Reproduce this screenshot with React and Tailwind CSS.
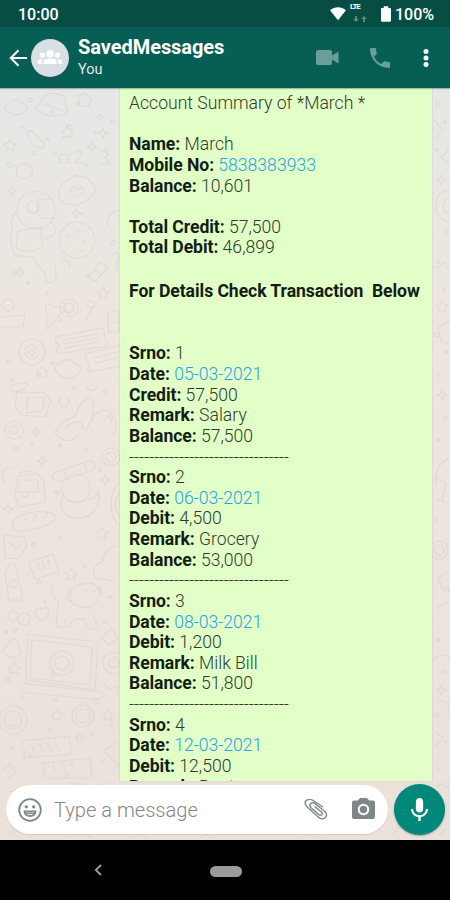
const summary = [
  { label: "Name", value: "March" },
  { label: "Mobile No", value: "5838383933", link: true },
  { label: "Balance", value: "10,601" },
];

const totals = [
  { label: "Total Credit", value: "57,500" },
  { label: "Total Debit", value: "46,899" },
];

const transactions = [
  { srno: "1", date: "05-03-2021", type: "Credit", amount: "57,500", remark: "Salary", balance: "57,500" },
  { srno: "2", date: "06-03-2021", type: "Debit", amount: "4,500", remark: "Grocery", balance: "53,000" },
  { srno: "3", date: "08-03-2021", type: "Debit", amount: "1,200", remark: "Milk Bill", balance: "51,800" },
  { srno: "4", date: "12-03-2021", type: "Debit", amount: "12,500", remark: "Rent" },
];

const dots = [
  [30, 100], [52, 112], [78, 104], [100, 117], [22, 127], [48, 139], [70, 127], [95, 133],
  [112, 121], [34, 153], [86, 165], [106, 150], [9, 165], [55, 153], [82, 214], [113, 243],
  [28, 283], [47, 293], [14, 274], [88, 276], [60, 320], [9, 362], [53, 363], [39, 374],
  [106, 392], [74, 388], [12, 380], [16, 449], [32, 445], [60, 445], [85, 450], [56, 492],
  [100, 470], [34, 545], [60, 537], [85, 567], [39, 582], [45, 602], [110, 597], [15, 630],
  [6, 632], [105, 622], [8, 680], [22, 697], [56, 700], [97, 701], [112, 725], [50, 730],
  [79, 738], [92, 734], [12, 748], [66, 776], [30, 755], [103, 762],
  [438, 104], [445, 122], [437, 150], [446, 232], [438, 262], [444, 290], [437, 335],
  [446, 352], [439, 375], [445, 418], [438, 440], [437, 520], [447, 590], [438, 640],
  [445, 672], [437, 715], [446, 742], [439, 770],
];

const sparks = [
  [103, 133], [92, 147], [12, 191], [76, 213], [42, 461], [8, 509], [105, 480], [20, 272],
  [36, 432], [441, 180], [442, 395], [441, 690],
];

const stars = [
  [10, 145], [67, 132], [103, 293], [102, 533], [71, 574], [57, 715], [14, 668], [108, 715], [442, 306],
];

const Doodles = () => (
  <svg
    className="absolute inset-0 h-full w-full"
    viewBox="0 88 450 752"
    preserveAspectRatio="none"
    fill="none"
    stroke="#d9d4cc"
    strokeOpacity="0.62"
    strokeWidth="1.2"
    strokeLinejoin="round"
    strokeLinecap="round"
  >
    {dots.map(([x, y], i) => (
      <circle key={i} cx={x} cy={y} r={i % 3 === 0 ? 2.2 : 1.4} />
    ))}
    {sparks.map(([x, y], i) => (
      <path
        key={i}
        transform={`translate(${x} ${y})`}
        d="M0-5 1.4-1.4 5 0 1.4 1.4 0 5-1.4 1.4-5 0-1.4-1.4z"
      />
    ))}
    {stars.map(([x, y], i) => (
      <path
        key={i}
        transform={`translate(${x} ${y})`}
        d="M0-6 2-2 6-1 3 2 4 6 0 4-4 6-3 2-6-1-2-2z"
      />
    ))}
    {/* clouds and hat */}
    <path d="M8 112c-5-3-2-8 2-8 1-5 9-6 11-1 5 0 8 5 4 9-5 4-12 3-17 0z" />
    <path d="M35 108c5-3 7-10 12-14 6-1 12 0 17 2l4 17c-10 5-25 4-33-5zM45 104l18 7" />
    <path d="M78 96l8-3 5 6-3 8-8-1z" />
    <path d="M27 133c1-3 6-3 8 1l9 10c1 5-4 5-7 3-5-3-9-9-10-14z" />
    <path d="M17 174c-2-5 0-10 6-10 6-1 11 4 9 9-2 6-12 8-15 1z" />
    <path d="M59 156l4-2 5 1v8h-8zM74 153c4-5 9-1 7 3l-6 7h9" />
    <path d="M100 150l9 4-4 4 5 5-10 2" />
    {/* badge with a heart */}
    <path d="M61 187c4-9 10-7 14-12 6 4 11-2 15 7 7 4 7 10 1 14-5 8-10 6-16 10-5-4-14 0-15-8-3-4-2-7 1-11z" />
    <path d="M77 197c-9-4-7-11-2-10l3 2c5-5 10 3-1 8z" />
    {/* helmet and robot */}
    <circle cx="36" cy="210" r="19" />
    <circle cx="33" cy="207" r="6" />
    <path d="M38 199h14M41 218h13M41 199c-5 4-5 14 0 19" />
    <path d="M16 212c-6 5-5 12-4 18l-2 8 4 17c8 2 13 0 20 3 4 13 12 9 12 24 11 2 11-6 9-16" />
    <path d="M18 231l22-4 3 19c-8 6-21 6-27 2zM51 222c8 6 4 15-6 17" />
    <circle cx="77" cy="240" r="18" strokeDasharray="6 2" />
    <path d="M67 236h3M77 230l3 1M84 240v3M72 248h3M80 252l2-2M86 232h2" />
    <path d="M108 226c-3-10 5-15 12-16M62 262c5-4 10 1 7 5M88 278l12-16 8 5-12 14zM95 270l7 5" />
    <path d="M112 255c4-6 9 1 5 5v10" />
    {/* flashlight */}
    <path d="M46 304l19 5-18 20zM65 309l5 7" />
    <circle cx="69" cy="308" r="9" strokeDasharray="2 1.5" />
    <circle cx="69" cy="308" r="5" />
    <path d="M86 320l6-12c-7-1-5-8 0-7 5 1 3 6-1 7" />
    <circle cx="8" cy="305" r="6" />
    <path d="M3 317l22-2-2 12H0M108 312h11v20h-11zM108 322h11" />
    <circle cx="32" cy="352" r="13" />
    <circle cx="32" cy="352" r="7" />
    <path d="M28 352l7-4-2 8z" />
    {/* tickets */}
    <path d="M55 337l48-9 4 18-49 8-1-5 2-4-3-3zM63 340l34-6M64 344l34-6M65 348l34-6" />
    <path d="M85 354l35-9M88 372l32-6M85 354l1 6 3 3-1 9M94 358l24-6M95 363l23-5" />
    <path d="M57 373c-5-6 1-11 5-10 3-6 11-4 12 1 8 0 8 9 3 11-5 5-14 5-20-2z" />
    <circle cx="42" cy="373" r="5" />
    <path d="M10 388c4-6 14-6 18-4-3 6-12 10-17 7z" />
    <path d="M17 392l28 1 6 8-6 16-24-2-6-9zM27 398l18-1-3 14-15 2z" />
    <circle cx="14" cy="430" r="9" strokeDasharray="4 2" />
    <circle cx="14" cy="430" r="4" />
    {/* mountain and bird */}
    <path d="M56 432c3-9 10-12 20-17 3-13 14-22 17-15 2 14-2 20-7 31M65 429c8-10 19-9 18 0M86 385c2 8 8 7 12 1" />
    <path d="M92 422c0-9 15-19 21-5 5 6 4 13-2 18M104 420l5-5 3 8" />
    <circle cx="64" cy="402" r="5" />
    <path d="M54 431c5 8 16 15 24 4" />
    <circle cx="111" cy="457" r="9" />
    <circle cx="111" cy="457" r="5" />
    {/* backpack */}
    <path d="M18 476l20-2 6 8 1 20-25 5-5-10zM20 480h18v12H18zM20 474c1-4 14-4 16 0" />
    <circle cx="25" cy="494" r="3" />
    <path d="M4 484c-5-14 3-20 9-15" />
    {/* snowman */}
    <path d="M54 473l34-12c6-2 9 6 4 10l-31 10c-7 2-12-5-7-8zM64 471l1 6M84 463l3 7" />
    <circle cx="76" cy="488" r="14" />
    <path d="M64 494c-7 13-1 24 14 24s24-13 19-26M66 500c8 4 19 2 30-4M60 492l-5 7M98 490l2 8" />
    <path d="M13 527c-3-8 6-12 16-14 13-3 27-1 26 4-1 8-18 11-25 13-8 2-15 2-17-3zM23 522l4-5M33 520l4-6M44 518l3-5" />
    <path d="M120 482c-12 8-12 36 0 44M120 493c-6 5-6 17 0 24" />
    <path d="M4 535l20 2 3 9-9 12-13 1zM10 543l6 5 5-5" />
    <path d="M29 562l24-8 6 18-24 7zM37 562l3 8M42 560l3 9M48 559l2 8" />
    <path d="M120 546c-12 0-17 8-18 16-7 2-10 10-7 16 6 3 13-1 18 4" />
    <path d="M5 572l4-8h6l7 30-1 7H9zM10 599h11" />
    <circle cx="13" cy="584" r="4" />
    {/* puppy */}
    <path d="M54 583c-4 6-2 14 4 18 2 8-4 14-1 26h13c1-9 7-9 14-8l4 10h11c-2-8-7-8-5-15M70 598c0-9 5-14 15-14 9-3 16 4 14 11-2 12-13 14-21 11-4-1-7-4-8-8z" />
    <path d="M70 590l-4 9 6 2M99 586l3 9M65 625v-6M86 590v2M94 590v2" />
    <path d="M42 621c-11-6-7-16 0-12 6-5 12 4 0 12z" />
    <circle cx="13" cy="616" r="5" />
    <circle cx="24" cy="619" r="6" />
    <path d="M2 650c6-2 6-11 12-11 6 1 4 9 7 14-5 6-14 6-19-3z" />
    {/* laptop */}
    <path d="M28 634l70 8-3 48-68-10c-3-12 1-30 1-46z" />
    <path d="M32 640l60 7-2 38-60-7z" />
    <path d="M21 692l68 7c14 2 19-6 11-7l-77-9" />
    <circle cx="62" cy="663" r="12" />
    <circle cx="62" cy="663" r="7" />
    <path d="M53 671l-2 6 7-3M101 637l11-9 6 11-10 6z" />
    <circle cx="114" cy="663" r="11" />
    <circle cx="114" cy="663" r="5" />
    <circle cx="13" cy="720" r="14" />
    <circle cx="13" cy="720" r="9" />
    <path d="M10 718v2M16 718v2M9 724c3 3 6 2 8 0" />
    <circle cx="83" cy="716" r="11" />
    <circle cx="83" cy="716" r="7" />
    <path d="M80 705l3-4 4 4M104 684l6 5 8-3-1 9" />
    <path d="M22 741l47-5 3 18-49 4 2-6-3-4zM31 744l4 9M39 743l4 9M47 742l4 9M55 742l4 8" />
    <path d="M43 763l47-5 2 20H44zM53 764l3 8M62 763l3 8M71 762l3 8" />
    <path d="M104 750l13-8M105 752l14 14M2 770l8-6 6 8-8 7" />
    <circle cx="80" cy="738" r="4" />
    {/* right edge */}
    <path d="M450 190c-18 0-20 30 0 32M450 198c-9 2-9 14 0 16M434 120l9 10-7 9M450 148l-9 10 9 6" />
    <path d="M436 268l8-5 6 8M450 320l-12 8 4 14 8 2M450 458c-10 3-16 14-14 28M434 478l12 5-4 18M436 500l14 3" />
    <circle cx="439" cy="550" r="9" />
    <circle cx="439" cy="550" r="5" />
    <path d="M450 570l-12 8 5 12M436 608l12-6M434 660c6-8 14-5 16-2M438 700l12 4v14M436 732l7 6-7 8M434 790l8-7 8 6" />
    {/* around the input */}
    <path d="M10 792c8-5 15-2 20 2M70 783l14 2 5 6M100 785l9-3M70 837c8-5 16-4 22 1M128 838l12-4 7 5M200 838c4-4 10-4 14 0M300 838l8-3 14 3M8 834l9-4M392 834l7-6M440 836l7-8" />
  </svg>
);

const Field = ({ label, value, link }) => (
  <p>
    <b className="font-bold tracking-[-0.07px] text-[#141d12]">{label}:</b>{" "}
    <span className={link ? "text-[#2aa3e6]" : ""}>{value}</span>
  </p>
);

const StatusBar = () => (
  <div className="flex h-[27px] shrink-0 items-center bg-[#074d44] pl-[18px] pr-4 text-white">
    <span className="mt-0.5 text-base font-medium leading-none">10:00</span>
    <div className="ml-auto flex items-center">
      <svg className="h-[15px] w-[18px]" viewBox="0 0 18 15" fill="#fff">
        <path d="M1 4.2C5.6.1 12.400.1 17 4.200L9 14.300z" />
      </svg>
      <div className="ml-[3px] flex h-[24px] w-5 flex-col">
        <span className="text-[8px] font-bold leading-[10px] tracking-[-1px]">LTE</span>
        <svg className="ml-[3px] mt-[3px] h-2 w-[14px]" viewBox="0 0 14 8" fill="#5d8983">
          <path d="M2 1h2v3h2L3 7 0 4h2zM10 7h2V4h2l-3-3-3 3h2z" />
        </svg>
      </div>
      <svg className="ml-[11px] h-4 w-[10px]" viewBox="0 0 11 17" fill="#fff">
        <path d="M3 0h5v2h2q1 0 1 1v13q0 1-1 1H1q-1 0-1-1V3q0-1 1-1h2z" />
      </svg>
      <span className="ml-1 mt-0.5 text-base font-medium leading-none">100%</span>
    </div>
  </div>
);

const Header = () => (
  <div className="relative z-10 flex h-[61px] shrink-0 items-center bg-[#075e54] pl-[9px] text-white shadow-[0_1px_1px_rgba(0,0,0,0.25)]">
    <svg className="h-[18px] w-[18px]" viewBox="0 0 18 18" fill="none" stroke="#fff" strokeWidth="2">
      <path d="M18 9H2M9.500 1.300 1.800 9l7.700 7.700" />
    </svg>
    <div className="ml-1 flex h-[38px] w-[38px] items-center justify-center rounded-full bg-[#d9dfe4]">
      <svg className="h-[17px] w-[26px]" viewBox="0 0 26 18" fill="#fff">
        <circle cx="13" cy="5" r="4" />
        <path d="M6 16v-2.500C6 11 10 10 13 10s7 1 7 3.500V16z" />
        <circle cx="5" cy="6.500" r="2.700" />
        <circle cx="21" cy="6.500" r="2.700" />
        <path d="M0 16v-2.500c0-2 3-3 5.500-3-1 1-1.300 2-1.300 3V16zM26 16v-2.500c0-2-3-3-5.500-3 1 1 1.300 2 1.300 3V16z" />
      </svg>
    </div>
    <div className="ml-[9px] flex flex-col">
      <span className="text-[20px] font-bold leading-[22px] tracking-[-0.05px]">SavedMessages</span>
      <span className="mt-[3px] text-[14.500px] leading-[18px] text-[#dfeae8]">You</span>
    </div>
    <div className="ml-auto flex items-center">
      <svg className="h-[15px] w-[23px]" viewBox="0 0 23 16" preserveAspectRatio="none" fill="#6a9e98">
        <path d="M2 0h12q2 0 2 2v3.800L22.500 1.500v13L16 10.200V14q0 2-2 2H2q-2 0-2-2V2q0-2 2-2z" />
      </svg>
      <svg className="ml-[31px] h-5 w-5" viewBox="3 3 18 18" fill="#6a9e98">
        <path d="M6.620 10.790c1.440 2.830 3.760 5.140 6.590 6.590l2.200-2.200c.27-.27.67-.36 1.020-.24 1.120.37 2.330.57 3.570.57.55 0 1 .45 1 1V20c0 .55-.45 1-1 1-9.390 0-17-7.610-17-17 0-.55.45-1 1-1h3.500c.55 0 1 .45 1 1 0 1.250.2 2.450.57 3.570.11.35.03.74-.25 1.020z" />
      </svg>
      <svg className="ml-[33px] mr-[21px] h-5 w-[6px]" viewBox="0 0 6 20" fill="#fff">
        <circle cx="3" cy="3.500" r="2.500" />
        <circle cx="3" cy="10" r="2.500" />
        <circle cx="3" cy="16.500" r="2.500" />
      </svg>
    </div>
  </div>
);

const MessageBubble = () => (
  <div className="ml-[120px] h-[693px] w-[312px] shrink-0 overflow-hidden whitespace-pre bg-[#e1ffc7] pl-[9px] pt-[5px] text-[17.600px] font-light leading-[20.620px] text-[#303b2c] shadow-[0_0_2px_rgba(0,0,0,0.15)]">
    <p>Account Summary of *March *</p>
    <br />
    {summary.map((row) => (
      <Field key={row.label} {...row} />
    ))}
    <br />
    {totals.map((row) => (
      <Field key={row.label} {...row} />
    ))}
    <p className="mb-[41.400px] mt-[23.400px] font-bold tracking-[-0.070px] text-[#141d12]">
      For Details Check Transaction  Below
    </p>
    {transactions.map((t) => (
      <div key={t.srno}>
        <Field label="Srno" value={t.srno} />
        <Field label="Date" value={t.date} link />
        <Field label={t.type} value={t.amount} />
        <Field label="Remark" value={t.remark} />
        {t.balance && (
          <>
            <Field label="Balance" value={t.balance} />
            <p className="tracking-[-0.050px]">{"-".repeat(32)}</p>
          </>
        )}
      </div>
    ))}
  </div>
);

const MessageInput = () => (
  <div className="flex items-center pl-1.5 pr-1 pt-[3px]">
    <div className="flex h-[49px] w-[382px] items-center rounded-full bg-white pl-3 shadow-[0_1px_1px_rgba(0,0,0,0.1)]">
      <svg className="h-6 w-6" viewBox="0 0 24 24" fill="none" stroke="#7f888c" strokeWidth="1.800">
        <circle cx="12" cy="12" r="10.800" />
        <path d="M6.500 13.500h11c-.5 6-10.500 6-11 0z" />
        <path d="M7.500 15.500h9" strokeWidth="1.200" />
        <circle cx="8.300" cy="8.800" r="1.600" fill="#7f888c" stroke="none" />
        <circle cx="15.700" cy="8.800" r="1.600" fill="#7f888c" stroke="none" />
      </svg>
      <span className="ml-3 mt-0.5 text-[20.100px] font-light text-[#868686]">Type a message</span>
      <svg className="ml-auto h-[22px] w-6" viewBox="0 0 24 24" preserveAspectRatio="none" fill="none" stroke="#828a8d" strokeWidth="1.500" strokeLinecap="round">
        <path d="M18.500 8.500 9.500 1.900C6-.5 1.500 0 1.100 4c-.2 2 .9 3.500 2.400 5L14.500 20c2 2 4.800 2.300 6.700.4 2-2 1.700-4.700-.3-6.700L11.500 5.500C9.800 4 7.800 4 6.700 5.200c-1.200 1.300-.9 3 .6 4.500l7.500 7.200c1 1 2.100 1 2.900.3.800-.8.700-1.900-.3-2.900L11 8.400" />
      </svg>
      <svg className="mb-0.5 ml-6 mr-[13px] h-[21px] w-[23px]" viewBox="0 0 23 21">
        <path d="M8 0h7l2.200 2.500H21q2 0 2 2V19q0 2-2 2H2q-2 0-2-2V4.500q0-2 2-2h3.800z" fill="#7f8689" />
        <circle cx="11.500" cy="11.500" r="5.800" fill="#fff" />
        <circle cx="11.500" cy="11.500" r="3.700" fill="#7f8689" />
      </svg>
    </div>
    <div className="ml-1.5 flex h-[51px] w-[51px] items-center justify-center rounded-full bg-[#00887a] shadow-[0_1px_2px_rgba(0,0,0,0.3)]">
      <svg className="h-[23px] w-[17px]" viewBox="5 2 14 19" fill="#fff">
        <path d="M12 14c1.660 0 2.990-1.340 2.990-3L15 5c0-1.660-1.340-3-3-3S9 3.340 9 5v6c0 1.660 1.340 3 3 3zm5.300-3c0 3-2.540 5.100-5.300 5.100S6.700 14 6.700 11H5c0 3.410 2.720 6.230 6 6.720V21h2v-3.280c3.280-.48 6-3.300 6-6.720h-1.700z" />
      </svg>
    </div>
  </div>
);

const NavBar = () => (
  <div className="flex h-[60px] shrink-0 items-center bg-black">
    <svg className="ml-[94px] h-3 w-2" viewBox="0 0 8 12" fill="none" stroke="#a0a0a0" strokeWidth="1.800">
      <path d="M7 1 1.800 6 7 11" />
    </svg>
    <div className="ml-[108px] mt-0.5 h-[11px] w-8 rounded-full bg-[#9b9b9b]" />
  </div>
);

export default function App() {
  return (
    <div className="flex h-[900px] w-[450px] flex-col overflow-hidden font-[Roboto,sans-serif]">
      <StatusBar />
      <Header />
      <div className="relative h-[752px] bg-linear-to-b from-[#e7e7e6] via-[#ede6df] via-30% to-[#ebe1db]">
        <Doodles />
        <div className="relative flex flex-col">
          <MessageBubble />
          <MessageInput />
        </div>
      </div>
      <NavBar />
    </div>
  );
}
